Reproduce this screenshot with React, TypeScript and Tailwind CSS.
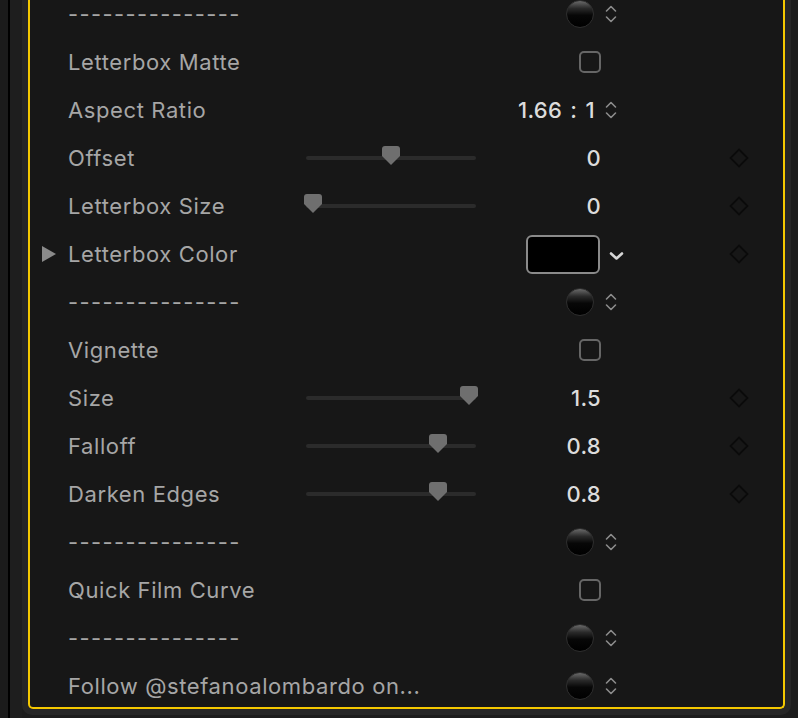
import React from "react";

const font = { fontFamily: "Inter, 'Noto Sans', sans-serif" };

function Sphere() {
  return (
    <div className="w-[28px] h-[28px] rounded-full border border-[#2e2e2e] bg-[linear-gradient(180deg,#6a6a6a_0%,#2a2a2a_28%,#070707_55%,#000_100%)]" />
  );
}

function UpDown() {
  return (
    <svg width="12" height="24" viewBox="0 0 12 24" fill="none">
      <path d="M1.5 9 L6 4.5 L10.5 9" stroke="#8c8c8c" strokeWidth="1.6" strokeLinecap="round" strokeLinejoin="round" />
      <path d="M1.5 15 L6 19.5 L10.5 15" stroke="#8c8c8c" strokeWidth="1.6" strokeLinecap="round" strokeLinejoin="round" />
    </svg>
  );
}

function Diamond() {
  return (
    <svg width="20" height="20" viewBox="0 0 20 20" fill="none">
      <path d="M10 1.5 L18.5 10 L10 18.5 L1.5 10 Z" stroke="#0b0b0b" strokeWidth="1.8" />
    </svg>
  );
}

function Slider({ left }: { left: number }) {
  return (
    <div className="relative w-[170px] h-[4px] rounded-full bg-[#2b2b2b]">
      <svg
        className="absolute top-[-10px]"
        style={{ left }}
        width="18"
        height="19"
        viewBox="0 0 18 19"
      >
        <path d="M3 0 H15 Q18 0 18 3 V10 L9 19 L0 10 V3 Q0 0 3 0 Z" fill="#6f6f6f" />
      </svg>
    </div>
  );
}

type Row =
  | { kind: "sep"; label: string }
  | { kind: "check"; label: string }
  | { kind: "ratio"; label: string; value: string }
  | { kind: "slider"; label: string; value: string; pos: number }
  | { kind: "color"; label: string };

const rows: Row[] = [
  { kind: "sep", label: "---------------" },
  { kind: "check", label: "Letterbox Matte" },
  { kind: "ratio", label: "Aspect Ratio", value: "1.66 : 1" },
  { kind: "slider", label: "Offset", value: "0", pos: 76 },
  { kind: "slider", label: "Letterbox Size", value: "0", pos: -2 },
  { kind: "color", label: "Letterbox Color" },
  { kind: "sep", label: "---------------" },
  { kind: "check", label: "Vignette" },
  { kind: "slider", label: "Size", value: "1.5", pos: 154 },
  { kind: "slider", label: "Falloff", value: "0.8", pos: 123 },
  { kind: "slider", label: "Darken Edges", value: "0.8", pos: 123 },
  { kind: "sep", label: "---------------" },
  { kind: "check", label: "Quick Film Curve" },
  { kind: "sep", label: "---------------" },
  { kind: "sep", label: "Follow @stefanoalombardo on..." },
];

function RowView({ row }: { row: Row }) {
  const isDash = row.kind === "sep" && row.label.startsWith("-");
  let right: React.ReactNode = null;
  let pr = "pr-[30px]";
  if (row.kind === "sep") {
    pr = "pr-[14px]";
    right = (
      <div className="flex items-center gap-[11px]">
        <Sphere />
        <UpDown />
      </div>
    );
  } else if (row.kind === "check") {
    right = <div className="w-[22px] h-[22px] rounded-[5px] border-2 border-[#666]" />;
  } else if (row.kind === "ratio") {
    pr = "pr-[14px]";
    right = (
      <div className="flex items-center gap-[10px]">
        <span className="text-[22px] text-[#dcdcdc] font-medium tracking-[0.3px] whitespace-pre pt-[1px]">
          {"1.66\u2009\u2009:\u2009\u20091"}
        </span>
        <UpDown />
      </div>
    );
  } else if (row.kind === "slider") {
    right = (
      <span className="text-[22px] text-[#dcdcdc] font-medium tracking-[0.3px] pt-[1px]">{row.value}</span>
    );
  } else if (row.kind === "color") {
    pr = "pr-[7px]";
    right = (
      <div className="flex items-center gap-[9px]">
        <div className="w-[74px] h-[39px] rounded-[6px] border-2 border-[#8a8a8a] bg-black" />
        <svg width="15" height="10" viewBox="0 0 15 10" fill="none" className="mt-[3px]">
          <path d="M2 2.5 L7.5 7.5 L13 2.5" stroke="#d6d6d6" strokeWidth="2.6" strokeLinecap="round" strokeLinejoin="round" />
        </svg>
      </div>
    );
  }
  const hasDiamond = row.kind === "slider" || row.kind === "color";
  return (
    <div className="h-[48px] flex items-center shrink-0">
      <div className="w-[38px] h-full flex items-center pl-[12px]">
        {row.kind === "color" && (
          <svg width="14" height="16" viewBox="0 0 14 16">
            <path d="M0 0 L14 8 L0 16 Z" fill="#8a8a8a" />
          </svg>
        )}
      </div>
      <div
        className={
          "w-[238px] shrink-0 text-[22px] text-[#a6a6a6] whitespace-nowrap pt-[1px] " +
          (isDash ? "tracking-[1.4px]" : "tracking-[0.6px]")
        }
      >
        {row.label}
      </div>
      <div className="w-[170px] shrink-0 flex items-center">
        {row.kind === "slider" && <Slider left={row.pos} />}
      </div>
      <div className={"w-[155px] shrink-0 flex items-center justify-end " + pr}>{right}</div>
      <div className="ml-[98px] w-[20px] h-[20px]">{hasDiamond && <Diamond />}</div>
    </div>
  );
}

export default function App() {
  return (
    <div className="w-[798px] h-[718px] overflow-hidden flex bg-[#1c1c1c]" style={font}>
      <div className="w-[8px] shrink-0 bg-[#1b1b1b]" />
      <div className="w-[2px] shrink-0 bg-black" />
      <div className="w-[12px] shrink-0 bg-[#1e1e1e]" />
      <div className="w-[769px] h-[715px] shrink-0 bg-[#262626] rounded-b-[10px] px-[6px] pb-[6px]">
        <div className="h-full border-2 border-t-0 border-[#f5c800] rounded-b-[5px] bg-[#171717] overflow-hidden">
          <div className="mt-[-10px] flex flex-col">
            {rows.map((r, i) => (
              <RowView key={i} row={r} />
            ))}
          </div>
        </div>
      </div>
      <div className="flex-1 bg-[#1c1c1c]" />
    </div>
  );
}
